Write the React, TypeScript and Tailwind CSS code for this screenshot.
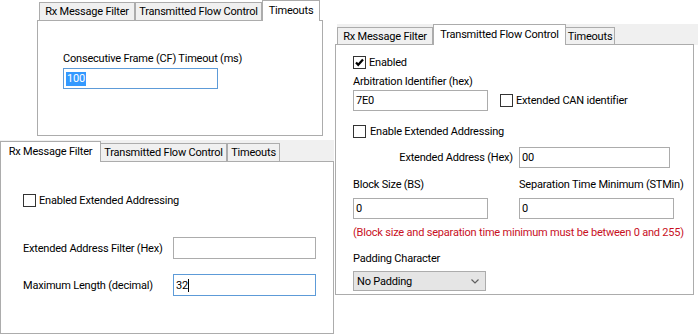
import React from "react";

const TAB_BORDER = "border-[#acacac]";

function Tab({ label, w, selected, h, ml = "" }: { label: string; w: string; selected?: boolean; h: string; ml?: string }) {
  if (selected) {
    return (
      <div className={`relative z-10 ${w} ${h} ${ml} bg-white border-t border-x ${TAB_BORDER} flex items-start justify-center pt-[3px] leading-[13px] whitespace-nowrap`}>
        {label}
      </div>
    );
  }
  return (
    <div className={`relative ${w} ${h} ${ml} bg-[#f0f0f0] border ${TAB_BORDER} flex items-start justify-center pt-[2px] leading-[13px] whitespace-nowrap`}>
      {label}
    </div>
  );
}

function Checkbox({ checked }: { checked?: boolean }) {
  return (
    <div className="w-[13px] h-[13px] border border-[#333333] bg-white flex items-center justify-center shrink-0">
      {checked && (
        <svg width="11" height="11" viewBox="0 0 11 11">
          <path d="M2 5.5 L4.2 7.8 L9 2.5" fill="none" stroke="#000" strokeWidth="2.2" />
        </svg>
      )}
    </div>
  );
}

function Input({ w, h = "h-[21px]", children, focused }: { w: string; h?: string; children?: React.ReactNode; focused?: boolean }) {
  return (
    <div className={`${w} ${h} border ${focused ? "border-[#5d9bd8]" : "border-[#acacac]"} bg-white flex items-center pl-[2px] leading-[13px] shrink-0`}>
      {children}
    </div>
  );
}

export default function App() {
  return (
    <div className="relative w-[698px] h-[334px] bg-white overflow-hidden text-[11px] tracking-[-0.2px] text-black font-['Roboto','Liberation_Sans',Arial,sans-serif] whitespace-nowrap">
      {/* Panel 1: Timeouts */}
      <div className="absolute left-[37px] top-0 w-[286px] flex flex-col">
        <div className="h-[21px] -mb-px flex items-end pl-[2px]">
          <Tab label="Rx Message Filter" w="w-[96px]" h="h-[19px]" />
          <Tab label="Transmitted Flow Control" w="w-[127px]" h="h-[19px]" />
          <Tab label="Timeouts" w="w-[58px]" h="h-[21px]" selected />
        </div>
        <div className="h-[116px] border border-[#acacac] bg-white pl-[25px] pt-[31px] flex flex-col">
          <div className="leading-[13px]">Consecutive Frame (CF) Timeout (ms)</div>
          <div className="mt-[3px]">
            <Input w="w-[155px]" focused>
              <span className="bg-[#3399ff] text-white leading-[14px] px-[1px]">100</span>
            </Input>
          </div>
        </div>
      </div>

      {/* Panel 2: Rx Message Filter */}
      <div className="absolute left-0 top-[140px] w-[334px] flex flex-col">
        <div className="h-[22px] -mb-px bg-[#f0f0f0] flex items-end">
          <Tab label="Rx Message Filter" w="w-[101px]" h="h-[21px]" selected />
          <Tab label="Transmitted Flow Control" w="w-[127px]" h="h-[19px]" ml="-ml-px" />
          <Tab label="Timeouts" w="w-[53px]" h="h-[19px]" />
        </div>
        <div className="h-[173px] border border-[#acacac] bg-white pl-[22px] flex flex-col">
          <div className="mt-[32px] flex items-center gap-[3px]">
            <Checkbox />
            <span className="leading-[13px]">Enabled Extended Addressing</span>
          </div>
          <div className="mt-[30px] flex items-center">
            <div className="w-[150px] leading-[13px]">Extended Address Filter (Hex)</div>
            <Input w="w-[143px]" h="h-[22px]" />
          </div>
          <div className="mt-[15px] flex items-center">
            <div className="w-[150px] leading-[13px]">Maximum Length (decimal)</div>
            <Input w="w-[143px]" h="h-[22px]" focused>
              <span>32</span>
              <span className="w-px h-[13px] bg-black" />
            </Input>
          </div>
        </div>
      </div>

      {/* Panel 3: Transmitted Flow Control */}
      <div className="absolute left-[335px] top-[24px] w-[363px] flex flex-col">
        <div className="h-[21px] -mb-px ml-[2px] bg-[#f0f0f0] flex items-end">
          <Tab label="Rx Message Filter" w="w-[96px]" h="h-[18px]" />
          <Tab label="Transmitted Flow Control" w="w-[133px]" h="h-[21px]" selected />
          <Tab label="Timeouts" w="w-[50px]" h="h-[18px]" ml="-ml-px" />
        </div>
        <div className="w-[359px] h-[251px] border border-[#acacac] bg-white pl-[17px] flex flex-col">
          <div className="mt-[11px] flex items-center gap-[3px]">
            <Checkbox checked />
            <span className="leading-[13px]">Enabled</span>
          </div>
          <div className="mt-[6px] leading-[13px]">Arbitration Identifier (hex)</div>
          <div className="mt-[2px] flex items-center">
            <Input w="w-[135px]">7E0</Input>
            <div className="ml-[12px] flex items-center gap-[3px]">
              <Checkbox />
              <span className="leading-[13px]">Extended CAN identifier</span>
            </div>
          </div>
          <div className="mt-[14px] flex items-center gap-[4px]">
            <Checkbox />
            <span className="leading-[13px]">Enable Extended Addressing</span>
          </div>
          <div className="mt-[9px] flex items-center">
            <div className="w-[160px] text-right leading-[13px]">Extended Address (Hex)</div>
            <div className="ml-[6px]">
              <Input w="w-[151px]">00</Input>
            </div>
          </div>
          <div className="mt-[10px] flex leading-[13px]">
            <div className="w-[166px]">Block Size (BS)</div>
            <div>Separation Time Minimum (STMin)</div>
          </div>
          <div className="mt-[7px] flex">
            <Input w="w-[135px]">0</Input>
            <div className="ml-[31px]">
              <Input w="w-[155px]">0</Input>
            </div>
          </div>
          <div className="mt-[7px] leading-[13px] text-[#c8101e]">
            (Block size and separation time minimum must be between 0 and 255)
          </div>
          <div className="mt-[13px] leading-[13px]">Padding Character</div>
          <div className="mt-[6px] w-[133px] h-[20px] border border-[#acacac] bg-[#e5e5e5] flex items-center justify-between pl-[3px] pr-[6px]">
            <span className="leading-[13px]">No Padding</span>
            <svg width="8" height="5" viewBox="0 0 8 5">
              <path d="M0.5 0.5 L4 4 L7.5 0.5" fill="none" stroke="#606060" strokeWidth="1.2" />
            </svg>
          </div>
        </div>
      </div>
    </div>
  );
}
